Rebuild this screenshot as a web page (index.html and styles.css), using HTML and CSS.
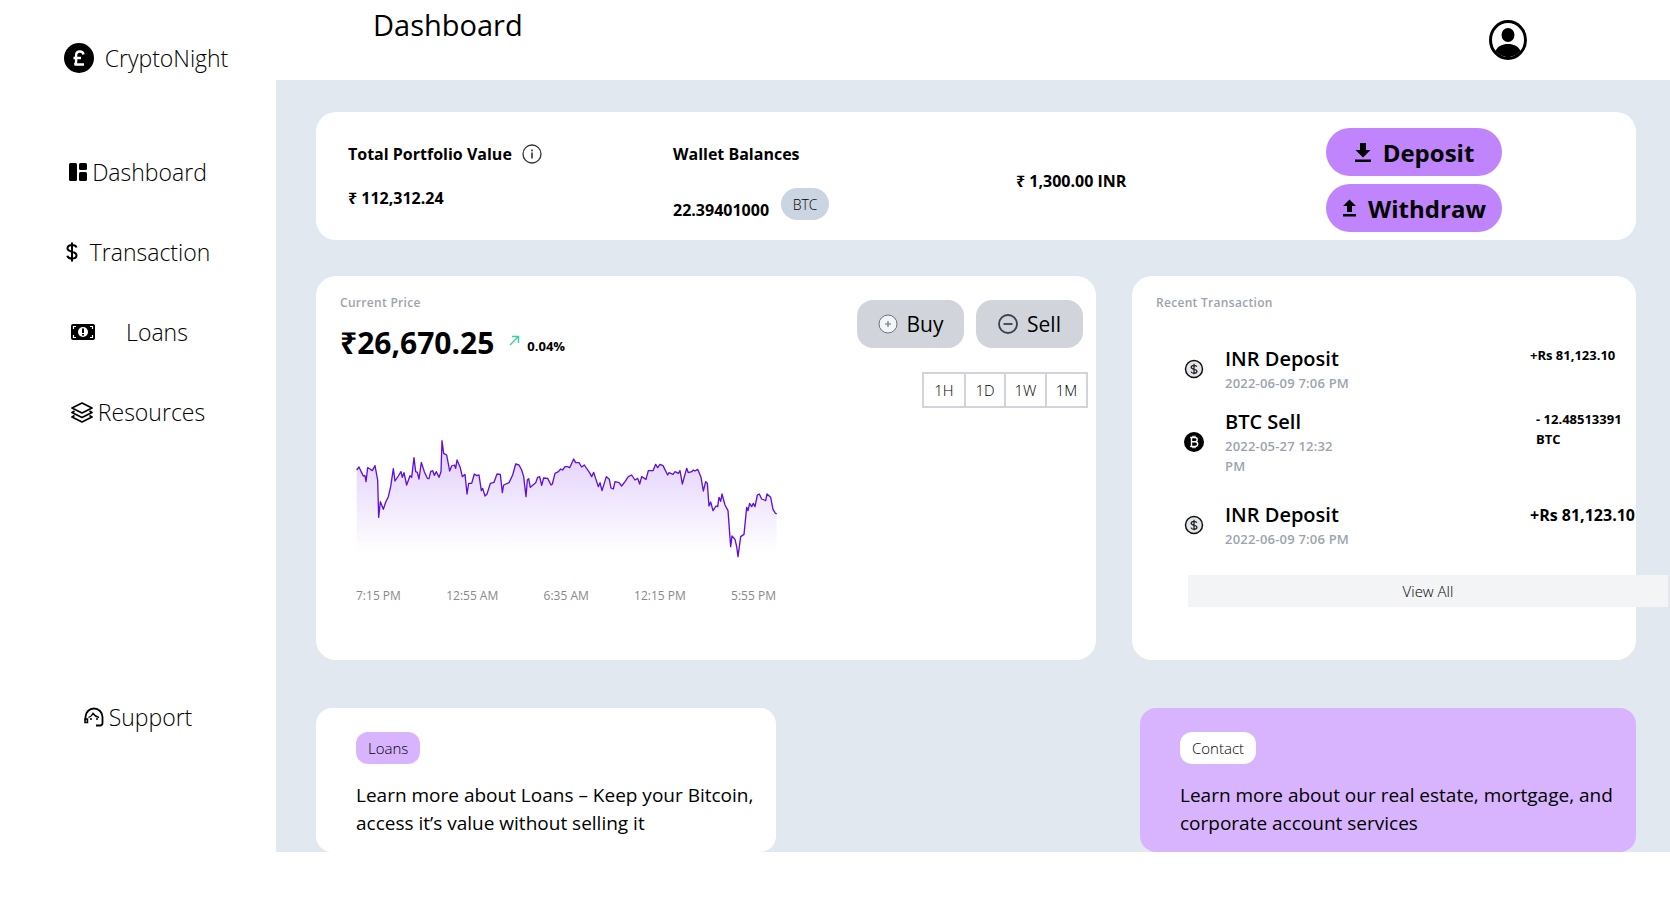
FILE: index.html
```html
<!DOCTYPE html>
<html lang="en">
<head>
  <meta charset="UTF-8">
  <title>CryptoNight Dashboard</title>
  <link rel="stylesheet" href="styles.css">
</head>
<body>

  <div class="app">
    <aside class="sidebar">
      <div class="brand">
        <svg class="brand-icon" width="30" height="30" viewBox="0 0 30 30">
          <circle cx="15" cy="15" r="15" fill="#000"/>
          <path d="M19.5 11.5c-.3-2-1.700-3-3.500-3-2.300 0-3.900 1.500-3.900 3.800v6.700c0 1-.5 2-1.600 2.500h9.500M9.500 15h7.500" fill="none" stroke="#fff" stroke-width="2.400"/>
        </svg>
        <span>CryptoNight</span>
      </div>

      <nav class="nav">
        <a class="nav-item gap-small">
          <svg width="18" height="18" viewBox="0 0 18 18"><rect x="0" y="0" width="8" height="18" rx="1.500"/><rect x="10" y="0" width="8" height="7" rx="1.500"/><rect x="10" y="9" width="8" height="9" rx="1.500"/></svg>
          <span>Dashboard</span>
        </a>
        <a class="nav-item">
          <svg width="12" height="22" viewBox="0 0 12 22"><path d="M10.500 6.500C10 4.800 8.500 4 6 4 3.200 4 1.500 5.300 1.500 7.300c0 4.700 9 2 9 7 0 2-1.800 3.300-4.500 3.300-2.700 0-4.200-1-4.700-2.900M6 1.500v19" fill="none" stroke="#000" stroke-width="2"/></svg>
          <span>Transaction</span>
        </a>
        <a class="nav-item loans-item">
          <svg width="24" height="16" viewBox="0 0 24 16"><rect width="24" height="16" rx="2"/><circle cx="12" cy="8" r="5" fill="#fff"/><rect x="11" y="4.500" width="2" height="4.500"/><rect x="11" y="10" width="2" height="1.500"/><path d="M2.500 5V2.500H5M21.500 5V2.500H19M2.500 11v2.500H5M21.500 11v2.500H19" fill="none" stroke="#fff" stroke-width="1.200"/></svg>
          <span>Loans</span>
        </a>
        <a class="nav-item gap-small">
          <svg width="22" height="21" viewBox="0 0 22 21"><path d="M11 1 21 6 11 11 1 6ZM3.500 9 1 10.500 11 15.500 21 10.500 18.500 9M3.500 13.500 1 15 11 20 21 15 18.500 13.500" fill="none" stroke="#000" stroke-width="1.700" stroke-linejoin="round"/></svg>
          <span>Resources</span>
        </a>
        <a class="nav-item gap-small support-item">
          <svg width="20" height="20" viewBox="0 0 20 20"><path d="M1.500 13.500V10a8.500 8.500 0 0 1 17 0v6c0 1.500-1 2.500-2.500 2.500h-4" fill="none" stroke="#000" stroke-width="1.800"/><path d="M1 12h2.500v3.500H1zM4.500 10.500C6 10 8 8.500 9 6.500c1.500 2 3.500 3.500 6 4" fill="none" stroke="#000" stroke-width="1.500"/><circle cx="7" cy="12" r="1"/><circle cx="13" cy="12" r="1"/></svg>
          <span>Support</span>
        </a>
      </nav>
    </aside>

    <div class="content">
      <header class="topbar">
        <h1>Dashboard</h1>
        <svg class="profile" width="38" height="40" viewBox="0 0 38 40">
          <ellipse cx="19" cy="20" rx="17.500" ry="18.500" fill="#fff" stroke="#000" stroke-width="3"/>
          <ellipse cx="19" cy="15" rx="6.500" ry="7"/>
          <path d="M6.500 31C9 26 13 24 19 24s10 2 12.500 7c-3 3.500-7.500 6-12.500 6S9.500 34.500 6.500 31Z"/>
        </svg>
      </header>

      <main class="main">
        <section class="card summary">
          <div class="summary-col">
            <div class="summary-label">Total Portfolio Value
              <svg class="info" width="20" height="20" viewBox="0 0 20 20"><circle cx="10" cy="10" r="9" fill="none" stroke="#333" stroke-width="1.300"/><rect x="9.200" y="8.500" width="1.600" height="6" fill="#333"/><rect x="9.200" y="5.500" width="1.600" height="1.800" fill="#333"/></svg>
            </div>
            <div class="summary-value">₹ 112,312.24</div>
          </div>
          <div class="summary-col">
            <div class="summary-label">Wallet Balances</div>
            <div class="balance-row">
              <span class="balance">22.39401000</span>
              <span class="coin-badge">BTC</span>
            </div>
          </div>
          <div class="summary-col inr-col">
            <div class="summary-value flat">₹ 1,300.00 INR</div>
          </div>
          <div class="summary-actions">
            <button class="pay-btn">
              <svg width="18" height="20" viewBox="0 0 18 20"><path d="M6 1h6v7h4.500L9 15.500 1.500 8H6ZM1 17.500h16V20H1Z"/></svg>
              Deposit
            </button>
            <button class="pay-btn">
              <svg width="15" height="18" viewBox="0 0 15 18"><path d="M5 13V7H1l6.500-6.500L14 7h-4v6ZM1 15h13v2.500H1Z"/></svg>
              Withdraw
            </button>
          </div>
        </section>

        <div class="middle">
          <section class="card price-card">
            <div class="price-top">
              <div>
                <div class="card-label">Current Price</div>
                <div class="price-line">
                  <span class="price">₹26,670.25</span>
                  <svg class="up-arrow" width="11" height="11" viewBox="0 0 11 11"><path d="M1 10 9.500 1.500M3 1.500h6.500V8" fill="none" stroke="#34d399" stroke-width="1.400"/></svg>
                  <span class="change">0.04%</span>
                </div>
              </div>
              <div class="price-actions">
                <div class="trade-btns">
                  <button class="trade-btn buy">
                    <svg width="20" height="20" viewBox="0 0 20 20"><circle cx="10" cy="10" r="9" fill="#f3f4f6" stroke="#6b7280" stroke-width="1"/><path d="M10 7v6M7 10h6" stroke="#6b7280" stroke-width="1.200"/></svg>
                    Buy
                  </button>
                  <button class="trade-btn sell">
                    <svg width="20" height="20" viewBox="0 0 20 20"><circle cx="10" cy="10" r="9" fill="none" stroke="#374151" stroke-width="1.800"/><path d="M5.500 10h9" stroke="#374151" stroke-width="1.800"/></svg>
                    Sell
                  </button>
                </div>
                <div class="ranges">
                  <span class="range w1">1H</span>
                  <span class="range w1">1D</span>
                  <span class="range w2">1W</span>
                  <span class="range w2">1M</span>
                </div>
              </div>
            </div>

            <svg class="chart" width="424" height="125" viewBox="30 60 1272 375">
              <defs>
                <linearGradient id="area" gradientUnits="userSpaceOnUse" x1="0" y1="60" x2="0" y2="400">
                  <stop offset="0" stop-color="#6200ea" stop-opacity="0.2"/>
                  <stop offset="1" stop-color="#6200ea" stop-opacity="0"/>
                </linearGradient>
              </defs>
              <path fill="url(#area)" d="M35 150 42 141 50 158 55 168 60 167 63 185 68 143 75 147 82 152 90 137 98 180 101 292 106 245 110 255 115 268 122 247 130 230 137 200 145 146 150 183 160 168 168 155 172 172 177 158 185 195 195 167 200 172 207 113 212 155 217 157 222 177 229 127 238 155 247 175 252 176 257 155 263 152 268 166 274 155 282 172 288 155 291 62 296 100 305 105 314 153 320 138 328 135 332 145 336 120 345 140 352 170 360 163 366 222 371 190 380 190 388 162 395 167 402 165 409 212 413 205 420 228 426 222 436 190 447 187 456 162 466 163 472 218 476 195 492 188 503 165 512 132 522 135 530 150 536 170 543 230 547 180 551 176 556 202 572 188 578 172 584 170 590 196 596 174 608 175 618 195 622 192 630 160 640 155 647 147 653 150 660 140 668 140 674 143 686 117 692 128 702 128 710 141 718 135 735 160 740 170 746 157 760 200 765 188 771 212 784 170 793 178 798 204 805 207 810 185 822 188 830 198 840 185 850 170 860 165 870 180 878 175 884 192 890 170 903 178 910 152 924 152 932 133 938 143 945 133 954 137 968 165 972 158 984 163 990 155 1000 160 1005 152 1012 192 1025 145 1030 158 1040 155 1045 150 1050 153 1058 148 1068 172 1075 213 1082 185 1087 190 1092 258 1097 246 1104 272 1113 258 1118 260 1122 232 1127 244 1131 222 1140 255 1149 272 1157 380 1161 348 1170 358 1175 380 1179 410 1187 350 1197 343 1205 262 1209 272 1214 250 1220 260 1225 250 1230 260 1237 225 1243 222 1250 237 1258 240 1262 242 1266 222 1277 232 1284 268 1290 278 1295 282V410H35Z"/>
              <path fill="none" stroke="#5f0fdc" stroke-width="4" stroke-linejoin="round" d="M35 150 42 141 50 158 55 168 60 167 63 185 68 143 75 147 82 152 90 137 98 180 101 292 106 245 110 255 115 268 122 247 130 230 137 200 145 146 150 183 160 168 168 155 172 172 177 158 185 195 195 167 200 172 207 113 212 155 217 157 222 177 229 127 238 155 247 175 252 176 257 155 263 152 268 166 274 155 282 172 288 155 291 62 296 100 305 105 314 153 320 138 328 135 332 145 336 120 345 140 352 170 360 163 366 222 371 190 380 190 388 162 395 167 402 165 409 212 413 205 420 228 426 222 436 190 447 187 456 162 466 163 472 218 476 195 492 188 503 165 512 132 522 135 530 150 536 170 543 230 547 180 551 176 556 202 572 188 578 172 584 170 590 196 596 174 608 175 618 195 622 192 630 160 640 155 647 147 653 150 660 140 668 140 674 143 686 117 692 128 702 128 710 141 718 135 735 160 740 170 746 157 760 200 765 188 771 212 784 170 793 178 798 204 805 207 810 185 822 188 830 198 840 185 850 170 860 165 870 180 878 175 884 192 890 170 903 178 910 152 924 152 932 133 938 143 945 133 954 137 968 165 972 158 984 163 990 155 1000 160 1005 152 1012 192 1025 145 1030 158 1040 155 1045 150 1050 153 1058 148 1068 172 1075 213 1082 185 1087 190 1092 258 1097 246 1104 272 1113 258 1118 260 1122 232 1127 244 1131 222 1140 255 1149 272 1157 380 1161 348 1170 358 1175 380 1179 410 1187 350 1197 343 1205 262 1209 272 1214 250 1220 260 1225 250 1230 260 1237 225 1243 222 1250 237 1258 240 1262 242 1266 222 1277 232 1284 268 1290 278 1295 282"/>
            </svg>
            <div class="chart-axis">
              <span>7:15 PM</span>
              <span>12:55 AM</span>
              <span>6:35 AM</span>
              <span>12:15 PM</span>
              <span>5:55 PM</span>
            </div>
          </section>

          <section class="card recent-card">
            <div class="card-label">Recent Transaction</div>
            <div class="tx-list">
              <div class="tx-row">
                <svg width="20" height="20" viewBox="0 0 20 20"><circle cx="10" cy="10" r="8.500" fill="#e5e7eb" stroke="#111" stroke-width="1.500"/><path d="M12.800 7.800C12.400 6.800 11.400 6.300 10 6.300c-1.700 0-2.800.8-2.800 2 0 2.800 5.700 1.200 5.700 4 0 1.200-1.200 2-2.900 2-1.500 0-2.600-.6-3-1.700M10 4.800v10.400" fill="none" stroke="#222" stroke-width="1.300"/></svg>
                <div>
                  <div class="tx-title">INR Deposit</div>
                  <div class="tx-date">2022-06-09 7:06 PM</div>
                </div>
                <div class="tx-amount">+Rs 81,123.10</div>
              </div>
              <div class="tx-row tx-sell">
                <svg width="20" height="20" viewBox="0 0 20 20"><circle cx="10" cy="10" r="10" fill="#000"/><path d="M7.500 5.500h3.300c1.500 0 2.400.8 2.400 2.100 0 1.300-.9 2.200-2.400 2.200H7.500m0 0h3.700c1.500 0 2.500.9 2.500 2.300s-1 2.400-2.500 2.400H7.500V5.500M6.200 5.500h2M6.200 14.500h2M9 3.800v1.700M11 3.800v1.700M9 14.500v1.700M11 14.500v1.700" fill="none" stroke="#fff" stroke-width="1.400"/></svg>
                <div>
                  <div class="tx-title">BTC Sell</div>
                  <div class="tx-date">2022-05-27 12:32<br>PM</div>
                </div>
                <div class="tx-amount sell-amount">- 12.48513391<br>BTC</div>
              </div>
              <div class="tx-row">
                <svg width="20" height="20" viewBox="0 0 20 20"><circle cx="10" cy="10" r="8.500" fill="#e5e7eb" stroke="#111" stroke-width="1.500"/><path d="M12.800 7.800C12.400 6.800 11.400 6.300 10 6.300c-1.700 0-2.800.8-2.800 2 0 2.800 5.700 1.200 5.700 4 0 1.200-1.200 2-2.900 2-1.500 0-2.600-.6-3-1.700M10 4.800v10.400" fill="none" stroke="#222" stroke-width="1.300"/></svg>
                <div>
                  <div class="tx-title">INR Deposit</div>
                  <div class="tx-date">2022-06-09 7:06 PM</div>
                </div>
                <div class="tx-amount big-amount">+Rs 81,123.10</div>
              </div>
            </div>
            <button class="view-all">View All</button>
          </section>
        </div>

        <div class="bottom">
          <section class="card promo loans-promo">
            <span class="pill">Loans</span>
            <p>Learn more about Loans – Keep your Bitcoin,<br>access it’s value without selling it</p>
          </section>
          <section class="card promo contact-promo">
            <span class="pill">Contact</span>
            <p>Learn more about our real estate, mortgage, and<br>corporate account services</p>
          </section>
        </div>
      </main>
    </div>
  </div>

</body>
</html>
```

FILE: styles.css
```css
* {
  box-sizing: border-box;
}

body {
  margin: 0;
  background: #fff;
  color: #000;
  font-family: "Open Sans", "Noto Sans", sans-serif;
}

.app {
  display: flex;
  width: 1670px;
  height: 912px;
  overflow: hidden;
}

/* sidebar */
.sidebar {
  width: 276px;
  flex-shrink: 0;
  padding-top: 43px;
}

.brand {
  display: flex;
  align-items: center;
  justify-content: center;
  gap: 11px;
  height: 30px;
  padding-left: 16px;
  font-size: 23px;
  font-weight: 300;
}

.nav {
  margin-top: 59px;
}

.nav-item {
  display: flex;
  align-items: center;
  justify-content: center;
  gap: 12px;
  height: 80px;
  font-size: 23px;
  font-weight: 300;
}

.gap-small {
  gap: 5px;
}

.loans-item {
  gap: 31px;
  padding-right: 17px;
}

.support-item {
  margin-top: 225px;
}

/* header */
.content {
  flex: 1;
  min-width: 0;
}

.topbar {
  display: flex;
  justify-content: space-between;
  align-items: center;
  height: 80px;
  padding: 0 143px 0 97px;
}

.topbar h1 {
  align-self: flex-start;
  margin: 5px 0 0;
  font-size: 29px;
  line-height: 40px;
  font-weight: 400;
}

/* main */
.main {
  height: 772px;
  padding: 32px 34px 0 40px;
  background: #e2e8f0;
}

.card {
  background: #fff;
  border-radius: 20px;
}

.summary {
  display: grid;
  grid-template-columns: 325px 343px 310px 176px;
  height: 128px;
  padding-left: 32px;
}

.summary-col {
  padding-top: 32px;
}

.summary-label {
  display: flex;
  align-items: center;
  gap: 10px;
  height: 20px;
  font-size: 16px;
  font-weight: 700;
}

.info {
  flex-shrink: 0;
}

.summary-value {
  margin-top: 24px;
  font-size: 16px;
  line-height: 20px;
  font-weight: 700;
}

.summary-value.flat {
  margin-top: 0;
}

.inr-col {
  padding-top: 59px;
}

.balance-row {
  display: flex;
  align-items: flex-end;
  gap: 12px;
  margin-top: 24px;
}

.balance {
  font-size: 16px;
  line-height: 20px;
  font-weight: 700;
}

.coin-badge {
  display: flex;
  align-items: center;
  justify-content: center;
  width: 48px;
  height: 32px;
  border-radius: 16px;
  background: #cbd5e1;
  font-size: 14px;
  font-weight: 300;
}

.summary-actions {
  display: flex;
  flex-direction: column;
  gap: 8px;
  padding-top: 16px;
}

.pay-btn {
  display: flex;
  align-items: center;
  justify-content: center;
  gap: 11px;
  height: 48px;
  padding: 0;
  border: 0;
  border-radius: 24px;
  background: #c084fc;
  color: #000;
  font-family: inherit;
  font-size: 24px;
  font-weight: 700;
}

/* price card */
.middle {
  display: grid;
  grid-template-columns: 780px 504px;
  gap: 36px;
  height: 384px;
  margin-top: 36px;
}

.price-card {
  padding: 19px 13px 0 24px;
}

.price-top {
  display: flex;
  justify-content: space-between;
}

.card-label {
  font-size: 12px;
  line-height: 16px;
  font-weight: 600;
  letter-spacing: 0.3px;
  color: #9ca3af;
}

.price-line {
  display: flex;
  align-items: center;
  margin-top: 14px;
}

.price {
  font-size: 30px;
  line-height: 36px;
  font-weight: 700;
}

.up-arrow {
  margin: -6px 7px 0 15px;
}

.change {
  padding-top: 6px;
  font-size: 13px;
  font-weight: 700;
}

.price-actions {
  display: flex;
  flex-direction: column;
  align-items: flex-end;
  gap: 24px;
  margin-top: 5px;
}

.trade-btns {
  display: flex;
  gap: 12px;
}

.trade-btn {
  display: flex;
  align-items: center;
  justify-content: center;
  gap: 9px;
  width: 107px;
  height: 48px;
  padding: 0;
  border: 0;
  border-radius: 16px;
  background: #d1d5db;
  color: #000;
  font-family: inherit;
  font-size: 21px;
  font-weight: 400;
}

.ranges {
  display: flex;
  height: 36px;
  margin-right: -5px;
  border: 2px solid #d1d5db;
}

.range {
  display: flex;
  align-items: center;
  justify-content: center;
  font-size: 15px;
  font-weight: 300;
  border-left: 2px solid #d1d5db;
}

.range:first-child {
  border-left: 0;
}

.w1 {
  width: 40px;
}

.w2 {
  width: 41px;
}

.chart {
  display: block;
  margin: 32px 0 0 15px;
  overflow: visible;
}

.chart-axis {
  display: flex;
  justify-content: space-between;
  width: 420px;
  margin: 23px 0 0 16px;
  font-size: 12px;
  line-height: 16px;
  color: #888;
}

/* recent transactions */
.recent-card {
  padding: 19px 0 0 24px;
}

.tx-list {
  display: flex;
  flex-direction: column;
  gap: 15px;
  margin-top: 34px;
}

.tx-row {
  display: grid;
  grid-template-columns: 20px 284px 1fr;
  column-gap: 21px;
  align-items: center;
  padding-left: 28px;
}

.tx-title {
  font-size: 20px;
  line-height: 28px;
  font-weight: 600;
}

.tx-date {
  font-size: 13px;
  line-height: 20px;
  font-weight: 600;
  letter-spacing: 0.2px;
  color: #9ca3af;
}

.tx-amount {
  align-self: start;
  font-size: 13px;
  line-height: 20px;
  font-weight: 700;
}

.tx-sell {
  margin-bottom: 10px;
}

.sell-amount {
  margin-left: 6px;
  padding-top: 1px;
}

.big-amount {
  font-size: 16px;
  line-height: 28px;
}

.view-all {
  display: block;
  width: 480px;
  height: 32px;
  margin: 26px 0 0 32px;
  padding: 0;
  border: 0;
  background: #f3f4f6;
  color: #000;
  font-family: inherit;
  font-size: 15px;
  font-weight: 300;
}

/* bottom cards */
.bottom {
  display: flex;
  justify-content: space-between;
  margin-top: 48px;
}

.promo {
  height: 144px;
  padding: 24px 0 0 40px;
  border-radius: 16px;
}

.loans-promo {
  width: 460px;
}

.contact-promo {
  width: 496px;
  background: #d8b4fe;
}

.pill {
  display: inline-flex;
  align-items: center;
  height: 32px;
  padding: 0 12px;
  border-radius: 12px;
  background: #d8b4fe;
  font-size: 15px;
  font-weight: 300;
}

.contact-promo .pill {
  background: #fff;
}

.promo p {
  margin: 17px 0 0;
  font-size: 19px;
  line-height: 28px;
  white-space: nowrap;
}
```
